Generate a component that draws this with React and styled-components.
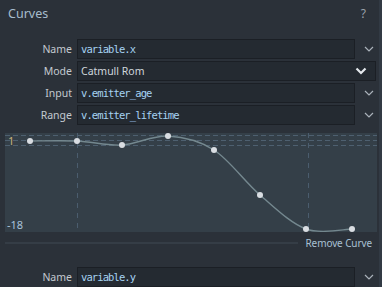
import React from "react";
import styled, { createGlobalStyle } from "styled-components";

const GlobalStyle = createGlobalStyle`
  html, body {
    margin: 0;
    padding: 0;
    background: #2b3139;
    overflow: hidden;
  }
`;

const points = [
  [25, 8],
  [72, 8],
  [117, 12],
  [163, 3],
  [209, 17],
  [255, 62],
  [301, 96],
  [347, 96],
];

// catmull-rom -> cubic bezier
const curvePath = (pts) => {
  let d = `M${pts[0][0]},${pts[0][1]}`;
  for (let i = 0; i < pts.length - 1; i++) {
    const p0 = pts[i - 1] || pts[i];
    const p1 = pts[i];
    const p2 = pts[i + 1];
    const p3 = pts[i + 2] || p2;
    const c1 = [p1[0] + (p2[0] - p0[0]) / 6, p1[1] + (p2[1] - p0[1]) / 6];
    const c2 = [p2[0] - (p3[0] - p1[0]) / 6, p2[1] - (p3[1] - p1[1]) / 6];
    d += ` C${c1[0]},${c1[1]} ${c2[0]},${c2[1]} ${p2[0]},${p2[1]}`;
  }
  return d;
};

const Chevron = ({ bold }) =>
  bold ? (
    <svg width="12" height="8" viewBox="0 0 12 8">
      <path d="M1.5 1.5 L6 6 L10.5 1.5" fill="none" stroke="#e4e8ec" strokeWidth="2.2" />
    </svg>
  ) : (
    <svg width="10" height="6" viewBox="0 0 10 6">
      <path d="M1 1 L5 5 L9 1" fill="none" stroke="#aab2ba" strokeWidth="1.2" />
    </svg>
  );

const Field = ({ label, value, mono = true, select }) => (
  <Row>
    <Label>{label}</Label>
    <Input $select={select} $mono={mono}>
      <span>{value}</span>
      {select && <Chevron bold />}
    </Input>
    {!select && (
      <DropButton>
        <Chevron />
      </DropButton>
    )}
  </Row>
);

const App = () => {
  return (
    <Panel>
      <GlobalStyle />
      <Header>
        <Title>Curves</Title>
        <Help>?</Help>
      </Header>
      <Form>
        <Field label="Name" value="variable.x" />
        <Field label="Mode" value="Catmull Rom" mono={false} select />
        <Field label="Input" value="v.emitter_age" />
        <Field label="Range" value="v.emitter_lifetime" />
      </Form>
      <Graph>
        <svg width="372" height="99" viewBox="0 0 372 99">
          <g stroke="#4e6070" strokeWidth="1" strokeDasharray="5 3">
            <line x1="0" y1="2.5" x2="372" y2="2.5" />
            <line x1="0" y1="7.5" x2="372" y2="7.5" />
            <line x1="0" y1="12.5" x2="372" y2="12.5" />
          </g>
          <g stroke="#4b5d6e" strokeWidth="1" strokeDasharray="5 5">
            <line x1="72.5" y1="0" x2="72.5" y2="99" />
            <line x1="303.5" y1="0" x2="303.5" y2="99" />
          </g>
          <path d={curvePath(points)} fill="none" stroke="#74888f" strokeWidth="1.4" />
          {points.map(([x, y], i) => (
            <circle key={i} cx={x} cy={y} r="3" fill="#d9dde2" />
          ))}
          <text x="3" y="12" fill="#c9b27a" fontSize="11" fontFamily="'Noto Sans', sans-serif">1</text>
          <text x="2" y="96" fill="#a9c2da" fontSize="11" fontFamily="'Noto Sans', sans-serif">-18</text>
        </svg>
      </Graph>
      <CurveFooter>
        <Rule />
        <RemoveButton>Remove Curve</RemoveButton>
      </CurveFooter>
      <Form>
        <Field label="Name" value="variable.y" />
      </Form>
      <ScrollTrack />
    </Panel>
  );
};

const Panel = styled.div`
  position: relative;
  width: 382px;
  height: 287px;
  background: #2b3139;
  font-family: "Noto Sans", "Open Sans", sans-serif;
  overflow: hidden;
`;

const ScrollTrack = styled.div`
  position: absolute;
  top: 0;
  right: 0;
  width: 3px;
  height: 100%;
  background: #323a44;
`;

const Header = styled.div`
  display: flex;
  justify-content: space-between;
  align-items: center;
  height: 26px;
  padding: 0 16px 0 8px;
  margin-bottom: 13px;
`;

const Title = styled.div`
  color: #a7bccd;
  font-size: 12.5px;
`;

const Help = styled.div`
  color: #9aa2aa;
  font-size: 12px;
`;

const Form = styled.div`
  display: flex;
  flex-direction: column;
  gap: 2px;
`;

const Row = styled.div`
  display: grid;
  grid-template-columns: 72px 1fr 22px;
  column-gap: 5px;
  height: 20px;
  align-items: stretch;
`;

const Label = styled.div`
  display: flex;
  align-items: center;
  justify-content: flex-end;
  color: #c3c9cf;
  font-size: 10.5px;
`;

const Input = styled.div`
  grid-column: ${(p) => (p.$select ? "2 / 4" : "2 / 3")};
  margin-right: ${(p) => (p.$select ? "6px" : "0")};
  display: flex;
  align-items: center;
  justify-content: space-between;
  box-sizing: border-box;
  padding: 0 8px 0 3px;
  background: #242a31;
  border: 1px solid #1b1f25;
  color: ${(p) => (p.$mono ? "#a6d2f2" : "#cfd6dc")};
  font-family: ${(p) =>
    p.$mono ? `"DejaVu Sans Mono", "Liberation Mono", monospace` : `"Noto Sans", sans-serif`};
  font-size: ${(p) => (p.$mono ? "10.5px" : "10.5px")};
  letter-spacing: ${(p) => (p.$mono ? "-0.9px" : "0")};
  white-space: nowrap;
`;

const DropButton = styled.div`
  display: flex;
  align-items: center;
  justify-content: center;
  padding-right: 4px;
`;

const Graph = styled.div`
  margin: 8px 5px 0;
  width: 372px;
  height: 99px;
  background: #343f48;
  line-height: 0;
`;

const CurveFooter = styled.div`
  display: flex;
  align-items: center;
  gap: 7px;
  height: 18px;
  padding: 2px 10px 0 5px;
  margin-bottom: 15px;
`;

const Rule = styled.div`
  flex: 1;
  height: 2px;
  background: #353d46;
`;

const RemoveButton = styled.div`
  color: #a9c0d4;
  font-size: 10px;
  letter-spacing: -0.1px;
  white-space: nowrap;
`;

export default App;
